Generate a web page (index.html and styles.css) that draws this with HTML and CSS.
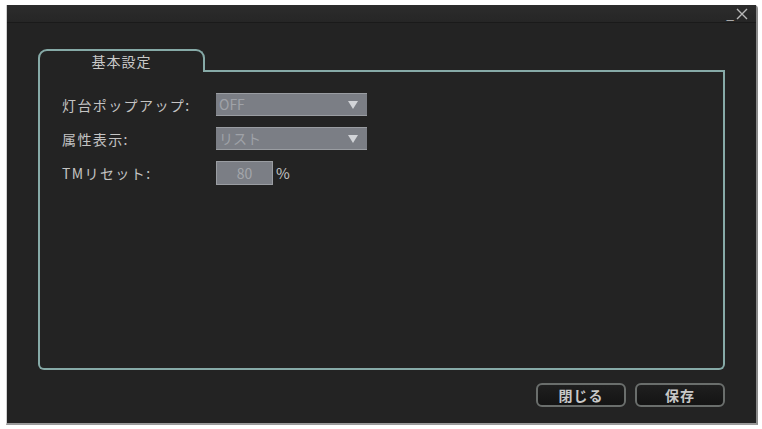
FILE: index.html
```html
<!DOCTYPE html>
<html lang="ja">
<head>
    <meta charset="UTF-8">
    <meta name="viewport" content="width=device-width, initial-scale=1.0">
    <title>基本設定</title>
    <link rel="stylesheet" href="styles.css">
</head>
<body>
    <div class="window">
        <div class="titlebar">
            <span class="win-btn min">_</span>
            <span class="win-btn close">
                <svg width="12" height="12" viewBox="0 0 12 12"><path d="M1 1 L11 11 M11 1 L1 11" stroke="#b8b8b8" stroke-width="1.4" fill="none"/></svg>
            </span>
        </div>
        <div class="content">
            <div class="tab-row">
                <div class="tab">基本設定</div>
                <div class="tab-fill"></div>
            </div>
            <div class="panel">
                <div class="row">
                    <div class="label">灯台ポップアップ:</div>
                    <div class="select">OFF <span class="arrow"></span></div>
                </div>
                <div class="row">
                    <div class="label">属性表示:</div>
                    <div class="select">リスト <span class="arrow"></span></div>
                </div>
                <div class="row">
                    <div class="label">TMリセット:</div>
                    <div class="input">80</div>
                    <span class="unit">%</span>
                </div>
            </div>
            <div class="footer">
                <button class="btn">閉じる</button>
                <button class="btn">保存</button>
            </div>
        </div>
    </div>
</body>
</html>
```

FILE: styles.css
```css
body { margin: 0; background: #ffffff; font-family: "Noto Sans CJK JP", "Liberation Sans", sans-serif; }
.window { margin: 5px 0 0 6px; width: 752px; height: 420px; background: #232323; border-right: 2px solid #8a8a8a; border-bottom: 2px solid #9a9a9a; border-left: 1px solid #cfcfcf; box-sizing: border-box; display: flex; flex-direction: column; border-radius: 0 4px 0 0; }
.titlebar { height: 17px; background: linear-gradient(#2c2c2c, #262626); border-bottom: 1px solid #1a1a1a; display: flex; justify-content: flex-end; align-items: center; padding-right: 8px; gap: 2px; }
.win-btn { color: #b8b8b8; font-size: 14px; line-height: 12px; display: flex; align-items: center; }
.win-btn.min { margin-top: -2px; }
.content { flex: 1; display: flex; flex-direction: column; padding: 26px 31px 0 31px; }
.tab-row { display: flex; height: 23px; }
.tab { width: 163px; border: 2px solid #86aaa7; border-bottom: none; border-radius: 9px 9px 0 0; color: #c8c8c8; font-size: 14px; letter-spacing: 1px; text-align: center; line-height: 20px; }
.tab-fill { flex: 1; border-bottom: 2px solid #86aaa7; }
.panel { height: 298px; border: 2px solid #86aaa7; border-top: none; border-radius: 0 0 6px 6px; padding: 21px 0 0 22px; display: flex; flex-direction: column; gap: 11px; box-sizing: border-box; }
.row { display: flex; align-items: center; height: 23px; }
.label { width: 154px; color: #c4c4c4; font-size: 14px; letter-spacing: 1.4px; }
.select { width: 151px; height: 23px; box-sizing: border-box; background: #7b7e85; border-top: 1px solid #9a9da2; border-bottom: 1px solid #9a9da2; color: #9fa2a8; font-size: 14px; line-height: 21px; padding-left: 3px; display: flex; justify-content: space-between; align-items: center; padding-right: 9px; }
.arrow { width: 0; height: 0; border-left: 5px solid transparent; border-right: 5px solid transparent; border-top: 8px solid #d2d4d8; }
.input { width: 57px; height: 24px; box-sizing: border-box; background: #7b7e85; border: 1px solid #9a9da2; color: #a3a6ab; font-size: 14px; line-height: 22px; text-align: center; }
.unit { color: #c4c4c4; font-size: 15px; margin-left: 3px; }
.footer { display: flex; justify-content: flex-end; gap: 9px; padding-top: 13px; }
.btn { width: 90px; height: 24px; background: linear-gradient(#1f1f1f, #141414); border: 2px solid #6a6e6c; border-radius: 6px; color: #c8c8c8; font-family: "Noto Sans CJK JP", sans-serif; font-size: 14px; font-weight: bold; letter-spacing: 1px; padding: 0; }
```
